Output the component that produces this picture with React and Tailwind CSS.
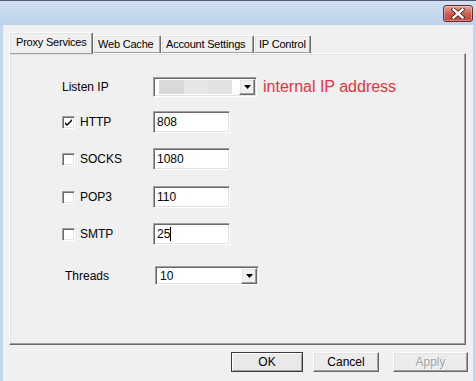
const sunken =
  'border border-t-[#a0a0a0] border-l-[#a0a0a0] border-r-white border-b-white shadow-[inset_1px_1px_0_#696969,inset_-1px_-1px_0_#e3e3e3]';

const raised =
  'border border-t-white border-l-white border-r-[#696969] border-b-[#696969] shadow-[inset_-1px_-1px_0_#a0a0a0,inset_1px_1px_0_#e3e3e3]';

const Checkbox = ({ checked }) => (
  <div className={`w-[13px] h-[13px] bg-white flex items-center justify-center ${sunken}`}>
    {checked && (
      <svg width="9" height="9" viewBox="0 0 9 9">
        <path d="M1 4 L3 6 L8 1 L8 3 L3 8 L1 6 Z" fill="#000" />
      </svg>
    )}
  </div>
);

const DropButton = () => (
  <div className={`w-[16px] h-[16px] bg-[#f0f0f0] flex items-center justify-center ${raised}`}>
    <svg width="7" height="4" viewBox="0 0 7 4">
      <path d="M0 0 H7 L3.5 4 Z" fill="#000" />
    </svg>
  </div>
);

const TextBox = ({ value, caret }) => (
  <div className={`w-[77px] h-[22px] bg-white flex items-center pl-[3px] ${sunken}`}>
    <span className="text-[12px] leading-none text-black">{value}</span>
    {caret && <span className="w-px h-[14px] bg-black" />}
  </div>
);

const CheckRow = ({ label, value, checked, caret, top }) => (
  <div className={`flex items-center h-[22px] ${top}`}>
    <div className="w-[91px] flex items-center gap-[5px]">
      <Checkbox checked={checked} />
      <span className="text-[12px]">{label}</span>
    </div>
    <TextBox value={value} caret={caret} />
  </div>
);

const Tab = ({ label, width, active }) => (
  <div
    className={`relative flex items-center whitespace-nowrap overflow-hidden rounded-t-[2px] ${raised} border-b-0 bg-[#f0f0f0] ${
      active ? 'h-[22px] z-10 -mb-[1px] pl-[6px] pb-[2px]' : 'h-[18px] pl-[4px]'
    }`}
    style={{ width }}
  >
    <span className="text-[11px] tracking-[-0.2px] text-black leading-none">{label}</span>
  </div>
);

export default function App() {
  return (
    <div className="w-[476px] h-[381px] flex flex-col bg-[#c2d6ed] font-['Liberation_Sans',Arial,sans-serif] text-black overflow-hidden">
      {/* title bar */}
      <div className="h-[25px] flex justify-end items-start pt-[4px] pr-[3px] bg-gradient-to-b from-[#d2e0f1] to-[#bcd2eb] border-t border-[#4d5d70]">
        <div className="w-[30px] h-[17px] rounded-[3px] border border-[#6b2b26] bg-gradient-to-b from-[#e3a596] via-[#cf5f52] to-[#c0443a] flex items-center justify-center shadow-[inset_0_0_0_1px_rgba(255,255,255,0.35)]">
          <svg width="14" height="11" viewBox="0 0 14 11">
            <path d="M2.5 1.5 L11.5 9.5 M11.5 1.5 L2.5 9.5" stroke="#4a2320" strokeWidth="4.2" strokeLinecap="square" />
            <path d="M2.5 1.5 L11.5 9.5 M11.5 1.5 L2.5 9.5" stroke="#fff" strokeWidth="2.4" strokeLinecap="square" />
          </svg>
        </div>
      </div>

      {/* client area */}
      <div className="flex-1 mx-[3px] bg-[#f0f0f0] flex flex-col pt-[7px]">
        <div className="ml-[6px] flex items-end">
          <Tab label="Proxy Services" width={84} active />
          <Tab label="Web Cache" width={68} />
          <Tab label="Account Settings" width={93} />
          <Tab label="IP Control" width={57} />
        </div>

        <div className={`ml-[6px] w-[457px] h-[292px] ${raised} flex flex-col pl-[52px]`}>
          {/* Listen IP */}
          <div className="flex items-center h-[20px] mt-[23px]">
            <span className="w-[91px] text-[12px]">Listen IP</span>
            <div className={`w-[104px] h-[20px] bg-white flex items-center pl-[5px] pr-[1px] ${sunken}`}>
              <div className="flex h-[14px] w-[73px]">
                <div className="w-[25px] bg-[#d9d9d9]" />
                <div className="w-[24px] bg-[#e6e6e6]" />
                <div className="w-[24px] bg-[#e1e1e1]" />
              </div>
              <div className="ml-auto">
                <DropButton />
              </div>
            </div>
            <span className="ml-[6px] text-[16px] text-[#e8323c] leading-none">internal IP address</span>
          </div>

          <CheckRow label="HTTP" value="808" checked top="mt-[14px]" />
          <CheckRow label="SOCKS" value="1080" top="mt-[15px]" />
          <CheckRow label="POP3" value="110" top="mt-[16px]" />
          <CheckRow label="SMTP" value="25" caret top="mt-[15px]" />

          {/* Threads */}
          <div className="flex items-center h-[19px] mt-[21px]">
            <span className="w-[91px] pl-[3px] text-[12px]">Threads</span>
            <div className={`ml-[2px] w-[104px] h-[19px] bg-white flex items-center pl-[4px] pr-[1px] ${sunken}`}>
              <span className="text-[12px] leading-none">10</span>
              <div className="ml-auto">
                <DropButton />
              </div>
            </div>
          </div>
        </div>

        {/* buttons */}
        <div className="flex justify-end items-center mt-[7px] pr-[5px] gap-[10px]">
          <button className="w-[72px] h-[20px] bg-[#e9e9e9] border border-[#3c3c3c] shadow-[inset_1px_1px_0_#fff,inset_-1px_-1px_0_#a0a0a0] text-[12px]">
            OK
          </button>
          <button className={`w-[66px] h-[20px] bg-[#ececec] ${raised} text-[12px]`}>Cancel</button>
          <button
            className={`ml-[4px] w-[75px] h-[20px] bg-[#ececec] ${raised} text-[12px] text-[#a0a0a0] [text-shadow:1px_1px_0_#fff]`}
          >
            Apply
          </button>
        </div>
      </div>
    </div>
  );
}
